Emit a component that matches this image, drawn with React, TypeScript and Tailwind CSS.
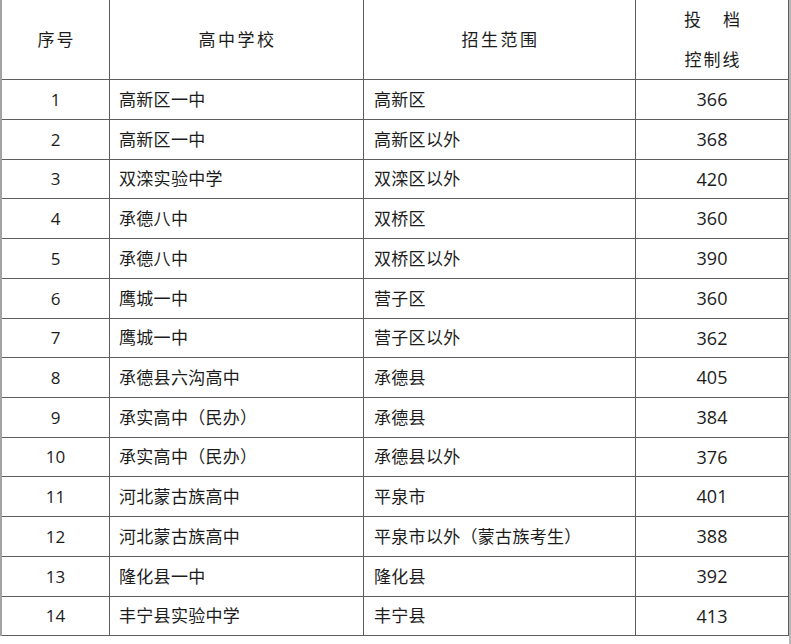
import React from 'react';

type Row = { no: string; school: string; area: string; score: string };

const rows: Row[] = [
  { no: '1', school: '高新区一中', area: '高新区', score: '366' },
  { no: '2', school: '高新区一中', area: '高新区以外', score: '368' },
  { no: '3', school: '双滦实验中学', area: '双滦区以外', score: '420' },
  { no: '4', school: '承德八中', area: '双桥区', score: '360' },
  { no: '5', school: '承德八中', area: '双桥区以外', score: '390' },
  { no: '6', school: '鹰城一中', area: '营子区', score: '360' },
  { no: '7', school: '鹰城一中', area: '营子区以外', score: '362' },
  { no: '8', school: '承德县六沟高中', area: '承德县', score: '405' },
  { no: '9', school: '承实高中（民办）', area: '承德县', score: '384' },
  { no: '10', school: '承实高中（民办）', area: '承德县以外', score: '376' },
  { no: '11', school: '河北蒙古族高中', area: '平泉市', score: '401' },
  { no: '12', school: '河北蒙古族高中', area: '平泉市以外（蒙古族考生）', score: '388' },
  { no: '13', school: '隆化县一中', area: '隆化县', score: '392' },
  { no: '14', school: '丰宁县实验中学', area: '丰宁县', score: '413' },
];

// 556px spread over 14 rows
const rowHeights = [
  'h-[40px]', 'h-[40px]', 'h-[39px]', 'h-[40px]', 'h-[40px]', 'h-[40px]', 'h-[39px]',
  'h-[40px]', 'h-[40px]', 'h-[39px]', 'h-[40px]', 'h-[40px]', 'h-[40px]', 'h-[39px]',
];

const line = 'border-r border-b border-[#5e5e5e]';

export default function App() {
  return (
    <div
      className="w-[791px] h-[644px] bg-white flex text-[17px] text-[#1c1c1c]"
      style={{ fontFamily: "'Open Sans', 'Noto Sans CJK SC', sans-serif" }}
    >
      <div className="w-[2px] h-[636px] bg-[#a3a3a3]" />
      <div className="flex flex-col w-[787px]">
        {/* Header */}
        <div className="flex h-[80px]">
          <div className={`w-[108px] ${line} flex items-center justify-center tracking-[2px] pl-[2px]`}>
            序号
          </div>
          <div className={`w-[254px] ${line} flex items-center justify-center tracking-[2.5px] pl-[2px]`}>
            高中学校
          </div>
          <div className={`w-[272px] ${line} flex items-center justify-center tracking-[2.5px] pl-[2px]`}>
            招生范围
          </div>
          <div className={`w-[153px] ${line} flex flex-col items-center justify-center leading-[40px]`}>
            <div className="flex gap-[22px]">
              <span>投</span>
              <span>档</span>
            </div>
            <div className="tracking-[2px] pl-[2px]">控制线</div>
          </div>
        </div>

        {rows.map((r, i) => (
          <div key={r.no} className={`flex ${rowHeights[i]}`}>
            <div className={`w-[108px] ${line} flex items-center justify-center`}>{r.no}</div>
            <div className={`w-[254px] ${line} flex items-center pl-[9px] tracking-[0.3px]`}>{r.school}</div>
            <div className={`w-[272px] ${line} flex items-center pl-[10px] tracking-[0.3px]`}>{r.area}</div>
            <div className={`w-[153px] ${line} flex items-center justify-center text-[18px]`}>{r.score}</div>
          </div>
        ))}
      </div>
      <div className="w-[2px] h-[644px] bg-[#b5b5b5]" />
    </div>
  );
}
